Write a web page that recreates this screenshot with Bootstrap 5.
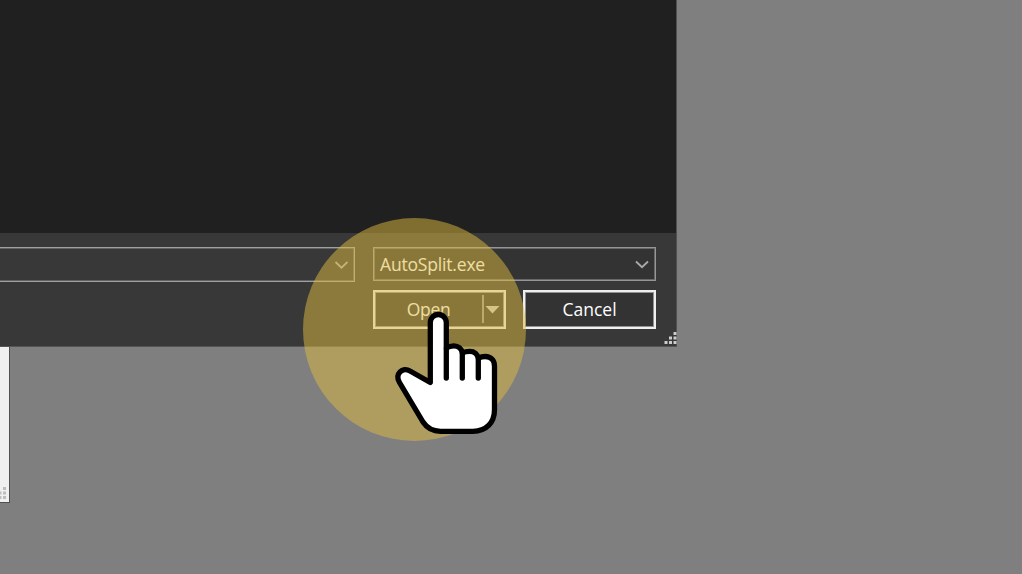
<!DOCTYPE html>
<html lang="en">
<head>
<meta charset="utf-8">
<meta name="viewport" content="width=device-width, initial-scale=1">
<title>Open file</title>
<link href="https://cdn.jsdelivr.net/npm/bootstrap@5.3.0/dist/css/bootstrap.min.css" rel="stylesheet">
<style>
body { background: #7f7f7f; font-family: "Open Sans", "Noto Sans", sans-serif; height: 574px; color: #fff; }
.dialog-box { width: 677px; height: 347px; background: #383838; border-right: 1px solid #505050; border-bottom: 1px solid #555; }
.file-pane { height: 233px; background: #202020; }
.dialog-foot { padding: 14px 20px 17px 0; }
.name-field { width: 355px; height: 35px; border: 1px solid #a0a0a0; border-left: 0; box-shadow: inset 0 1px #626262, inset -1px -1px #626262; margin-right: 18px; padding-right: 6px; background: #383838; }
.type-field { width: 283px; height: 34px; border: 1px solid #969696; box-shadow: inset 0 0 0 1px #686868; background: #333; padding: 0 6px; }
.dlg-btn { width: 133px; height: 39px; border: 2px solid #efefef; box-shadow: inset 0 0 0 1px #929292; border-radius: 0; background: #333; color: #fff; padding: 0 0 1px; }
.field-text { font-size: 17.5px; line-height: 30px; }
.file-type { letter-spacing: -.18px; }
.button-row { margin-top: 8px; gap: 17px; }
.name-row { height: 35px; }
.open-label { width: 107px; text-align: center; letter-spacing: -.3px; }
.under-window { width: 10px; height: 156px; background: #f0f0f0; border-right: 1px solid #505050; border-bottom: 1px solid #505050; }
.size-grip { right: -1px; bottom: 1px; }
.click-halo { left: 303px; top: 218px; width: 223px; height: 223px; background: rgba(224,188,64,.5); }
.hand-pointer { left: 385px; top: 300px; }
</style>
</head>
<body class="overflow-hidden position-relative">
<main class="dialog-box position-relative">
  <div class="file-pane"></div>
  <div class="dialog-foot">
    <div class="d-flex align-items-start name-row">
      <div class="name-field d-flex align-items-center justify-content-end">
        <svg width="14" height="9" viewBox="0 0 14 9" fill="none" stroke="#aaa" stroke-width="1.8"><path d="M1.500 2 7.500 7.700 13.500 2"/></svg>
      </div>
      <div class="type-field d-flex align-items-center justify-content-between">
        <span class="field-text file-type">AutoSplit.exe</span>
        <svg width="14" height="9" viewBox="0 0 14 9" fill="none" stroke="#aaa" stroke-width="1.8"><path d="M1 1.500 7 7.200 13 1.500"/></svg>
      </div>
    </div>
    <div class="d-flex justify-content-end button-row">
      <button type="button" class="btn dlg-btn d-flex align-items-center">
        <span class="field-text open-label">Open</span>
        <svg width="20" height="28" viewBox="0 0 20 28"><path d="M0 0h2v28H0z" fill="#999"/><path d="M3.500 11h14l-7 7.500z" fill="#ccc"/></svg>
      </button>
      <button type="button" class="btn dlg-btn d-flex align-items-center justify-content-center"><span class="field-text">Cancel</span></button>
    </div>
  </div>
  <svg class="size-grip position-absolute" width="13" height="13" viewBox="0 0 13 13" fill="#ccc"><path d="M9.500 0h3v3h-3zM5 4.500h3v3H5zM9.500 4.500h3v3h-3zM.5 9h3v3h-3zM5 9h3v3H5zM9.500 9h3v3h-3z"/></svg>
</main>
<div class="under-window d-flex align-items-end">
  <svg width="9" height="17" viewBox="0 0 9 17" fill="#bdbdbd"><path d="M3 2h3v3H3zM0 6.500h1.500v3H0zM3 6.500h3v3H3zM0 11h1.500v3H0zM3 11h3v3H3z"/></svg>
</div>
<div class="click-halo position-absolute rounded-circle"></div>
<svg class="hand-pointer position-absolute" width="120" height="145" viewBox="0 0 120 145" fill="#fff" stroke="#000" stroke-width="5.3" stroke-linecap="round" stroke-linejoin="round">
  <path d="M45.300 82.500V22.500a8 8 0 0 1 16 0V48c2-1.300 4.700-2.200 7.500-2.200 4.500 0 7.800 3 8.500 7.200 2-1.100 4.800-1.700 7.500-1.700 4.500 0 7.700 2.700 8.500 7 2-1.100 4.500-1.800 7-1.800 5.500 0 9.200 4 9.200 9.500v43.500C109.500 123 101 131.300 88 131.300H55.500C48 131.300 42 128 38 122L14.500 82.500C9.500 74 17.500 66.500 25 71z"/>
  <path d="M61.300 49v29M77.300 54v24M93.300 59v19"/>
</svg>
<script src="https://cdn.jsdelivr.net/npm/bootstrap@5.3.0/dist/js/bootstrap.bundle.min.js"></script>
</body>
</html>
